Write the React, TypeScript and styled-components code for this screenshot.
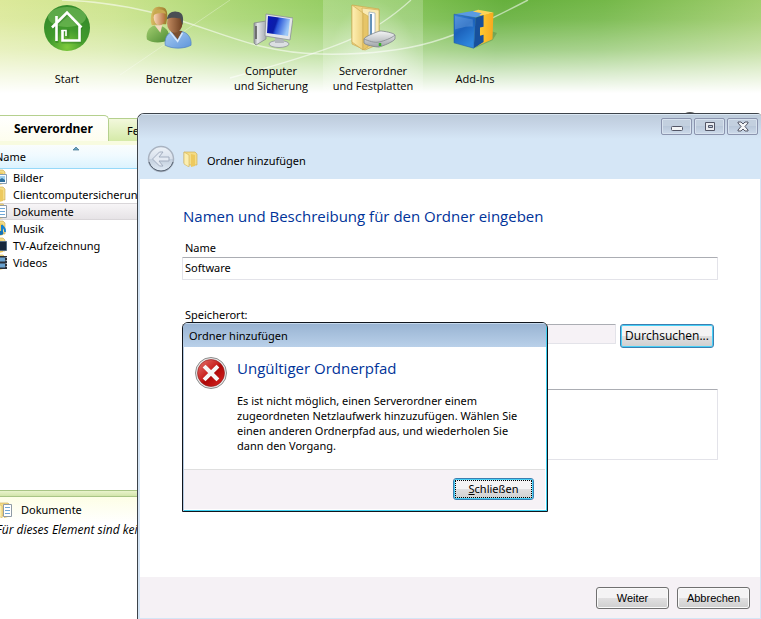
import React from "react";
import styled, { createGlobalStyle, css } from "styled-components";

const Global = createGlobalStyle`
  *, *::before, *::after { box-sizing: border-box; }
  body {
    margin: 0;
    background: #fff;
    color: #000;
    font: 11px/15px "Noto Sans", "Open Sans", sans-serif;
  }
  button, input, textarea { font: inherit; color: inherit; }
`;

const narrowFont = css`
  font-family: "Open Sans", "Noto Sans", sans-serif;
`;

/* ---------- server console ---------- */

const Shell = styled.div`
  position: relative;
  display: flex;
  flex-direction: column;
  min-height: 100vh;
  overflow: hidden;
`;

const Banner = styled.header`
  position: relative;
  height: 96px;
  background:
    linear-gradient(to bottom, rgba(255,255,255,0) 0%, rgba(255,255,255,.08) 20%, rgba(255,255,255,.38) 52%, rgba(255,255,255,.72) 76%, #fff 97%),
    linear-gradient(99deg, #dce99a 0%, #cce48e 15%, #a9d673 31%, #8cc95c 48%, #66b03d 65%, #74b849 78%, #a6d072 100%);
`;

const Swirls = styled.svg`
  position: absolute;
  inset: 0;
  width: 761px;
  height: 96px;
`;

const Nav = styled.nav`
  position: relative;
  display: flex;
  gap: 2px;
  height: 100%;
  padding-left: 17px;
`;

const NavButton = styled.button<{ $active?: boolean }>`
  display: flex;
  flex-direction: column;
  align-items: center;
  justify-content: flex-start;
  width: 100px;
  height: 100%;
  padding: 0;
  border: 0;
  background: none;
  ${(p) =>
    p.$active &&
    css`
      background: radial-gradient(ellipse at 50% 90%, rgba(255,255,255,.7), rgba(255,255,255,.2) 70%);
    `}
`;

const NavIcon = styled.span`
  display: flex;
  align-items: center;
  justify-content: center;
  height: 56px;
  margin-bottom: 5px;
`;

const NavLabel = styled.span`
  ${narrowFont}
  display: flex;
  align-items: center;
  height: 34px;
  white-space: pre-line;
  text-align: center;
`;

const TabBar = styled.div`
  display: flex;
  align-items: flex-end;
  height: 45px;
`;

const Tab = styled.button<{ $active?: boolean }>`
  height: 23px;
  width: 100px;
  padding: 0 0 0 18px;
  text-align: left;
  border: 1px solid #b5d08e;
  border-bottom: 0;
  border-left: 0;
  border-radius: 0 4px 0 0;
  background: linear-gradient(#f2f8dc, #d5eaa8);
  ${(p) =>
    p.$active &&
    css`
      height: 26px;
      width: 109px;
      padding: 0 0 0 14px;
      font-weight: 700;
      font-size: 12px;
      background: linear-gradient(#fff, #fdfdee);
      border-radius: 0 5px 0 0;
    `}
`;

const HelpButton = styled.button`
  display: flex;
  align-items: flex-start;
  width: 24px;
  height: 29px;
  margin: 0 59px 0 auto;
  padding: 0;
  border: 0;
  background: none;
`;

const Panes = styled.main`
  display: flex;
  flex-direction: column;
  flex: 1;
  margin-left: -12px;
`;

const ListPane = styled.section`
  flex: 1;
  border-top: 4px solid #f8fbe0;
`;

const FolderTable = styled.table`
  width: 100%;
  border-collapse: collapse;
`;

const HeadCell = styled.th`
  position: relative;
  height: 23px;
  padding: 1px 0 0 7px;
  text-align: left;
  font-weight: 400;
  background: linear-gradient(#fafdfd, #f0faff 45%, #dcf3fe);
  border-bottom: 1px solid #96d9f9;
`;

const SortMark = styled.svg`
  position: absolute;
  left: 84px;
  top: 1px;
`;

const Row = styled.tr<{ $selected?: boolean }>`
  background: ${(p) => (p.$selected ? "linear-gradient(#f8f6f8, #e5e2e5)" : "none")};
  box-shadow: ${(p) => (p.$selected ? "inset 0 1px #d9d6d9, inset 0 -1px #d9d6d9" : "none")};
`;

const Cell = styled.td`
  height: 17px;
  padding: 0 0 0 3px;
`;

const ItemLabel = styled.span`
  display: flex;
  align-items: center;
  gap: 6px;
  height: 17px;
  white-space: nowrap;
`;

const Splitter = styled.div`
  height: 7px;
  border: solid #a9c586;
  border-width: 1px 0;
  background: linear-gradient(#e9f3cc, #d3e5ab);
`;

const DetailsPane = styled.section`
  height: 122px;
  background: linear-gradient(#fdfee6, #fff 26px);
`;

const DetailsHead = styled.div`
  display: flex;
  align-items: center;
  gap: 9px;
  height: 25px;
  padding-left: 8px;
`;

const DetailsText = styled.p`
  ${narrowFont}
  margin: 0 0 0 8px;
  font-size: 12px;
  font-style: italic;
`;

/* ---------- wizard window ---------- */

const Wizard = styled.section`
  position: absolute;
  left: 137px;
  top: 113px;
  right: 0;
  bottom: 0;
  display: flex;
  flex-direction: column;
  border: solid #3d434a;
  border-width: 1px 0 0 1px;
  border-radius: 7px 4px 0 0;
  background: #fff;
  overflow: hidden;
`;

const WizardHead = styled.header`
  height: 65px;
  background: linear-gradient(#bccbda 0, #c6d4e5 10px, #d5e6f6 25px);
  box-shadow: inset 1px 1px #dbe8f4;
`;

const CaptionButtons = styled.div`
  display: flex;
  justify-content: flex-end;
  gap: 2px;
  padding: 4px 3px 0 0;
`;

const CaptionButton = styled.button`
  display: flex;
  align-items: center;
  justify-content: center;
  width: 31px;
  height: 17px;
  padding: 0;
  border: 1px solid #8b94ae;
  border-radius: 2px;
  background: linear-gradient(#c3d0df 45%, #b9c8da 50%, #cddaea);
  box-shadow: inset 0 0 0 1px #d8e3ef;
`;

const WizardTitle = styled.div`
  display: flex;
  align-items: center;
  height: 28px;
  padding-left: 9px;
  margin-top: 10px;
`;

const BackButton = styled.button`
  width: 28px;
  height: 28px;
  padding: 0;
  margin-right: 8px;
  border: 0;
  background: none;
`;

const TitleText = styled.h1`
  margin: 3px 0 0 8px;
  font-size: 11px;
  font-weight: 400;
`;

const WizardBody = styled.form`
  flex: 1;
  padding: 26px 42px 0 42px;
  border: solid #d5e5f5;
  border-width: 0 1px 0 2px;
`;

const Heading = styled.h2`
  ${narrowFont}
  margin: 0 0 0 1px;
  color: #039;
  font-size: 15px;
  line-height: 22px;
  font-weight: 400;
`;

const FieldLabel = styled.label`
  display: block;
  height: 17px;
  margin-left: 3px;
`;

const fieldBox = css`
  display: block;
  border: 1px solid #e3e3e9;
  border-top-color: #abadb3;
  border-radius: 1px;
  padding: 0 2px;
  outline: 0;
`;

const TextInput = styled.input`
  ${fieldBox}
  width: 100%;
  height: 23px;
  padding-bottom: 2px;
  &:disabled { background: #f6f2f6; height: 20px; flex: 1; }
`;

const TextArea = styled.textarea`
  ${fieldBox}
  width: 100%;
  height: 71px;
  margin-top: 41px;
  resize: none;
`;

const Field = styled.div`
  margin-top: 13px;
  & + & { margin-top: 27px; }
`;

const FieldRow = styled.div`
  display: flex;
  align-items: flex-start;
  gap: 4px;
  padding-right: 4px;
`;

const PushButton = styled.button<{ $width: number; $default?: boolean; $classic?: boolean }>`
  flex: none;
  width: ${(p) => p.$width}px;
  height: 22px;
  padding: 0;
  border: 1px solid #707070;
  border-radius: 3px;
  background: linear-gradient(#f4f3f4 48%, #e0dfe0 52%, #cfcfcf);
  box-shadow: inset 0 0 0 1px #fafafa;
  line-height: 18px;
  ${(p) =>
    p.$default &&
    css`
      border-color: #3c7fb1;
      box-shadow: inset 0 0 0 1px #48d0f7;
    `}
  ${(p) => p.$classic && css`font-family: "Liberation Sans", Arial, sans-serif;`}
`;

const BrowseButton = styled(PushButton)`
  ${narrowFont}
  height: 24px;
  font-size: 12px;
`;

const WizardFoot = styled.footer`
  display: flex;
  justify-content: flex-end;
  gap: 8px;
  height: 42px;
  padding: 10px 10px 0 0;
  background: #f5f1f5;
  border: solid #d5e5f5;
  border-width: 0 1px 1px 2px;
`;

/* ---------- error dialog ---------- */

const ErrorDialog = styled.section`
  position: absolute;
  left: 182px;
  top: 322px;
  width: 366px;
  border: 1px solid #10151c;
  border-radius: 6px 6px 0 0;
  background: #fff;
  box-shadow: inset 1px 0 #b6cbe3, inset -1px -1px #3fd0f0;
  padding: 0 2px 2px 1px;
  overflow: hidden;
`;

const ErrorTitle = styled.header`
  height: 24px;
  padding: 0 6px;
  margin: 0 -1px;
  line-height: 26px;
  background: linear-gradient(#98b3d2, #b9d0e9);
  box-shadow: inset 0 1px #c6d9ec;
`;

const ErrorBody = styled.div`
  display: flex;
  align-items: flex-start;
  gap: 10px;
  height: 122px;
  padding: 10px 16px 0 11px;
`;

const ErrorHeading = styled.h2`
  ${narrowFont}
  margin: 0 0 14px;
  color: #039;
  font-size: 15px;
  line-height: 22px;
  font-weight: 400;
`;

const ErrorMessage = styled.p`
  margin: 0;
  white-space: pre-line;
`;

const ErrorFoot = styled.footer`
  display: flex;
  justify-content: flex-end;
  height: 40px;
  padding: 8px 11px 0 0;
  background: #f6f2f6;
  border-top: 1px solid #dfdfdf;
`;

const CloseButton = styled(PushButton)`
  outline: 1px dotted #000;
  outline-offset: -3px;
`;

/* ---------- drawings ---------- */

const HomeIcon = () => (
  <svg width="48" height="48" viewBox="0 0 48 48">
    <defs>
      <radialGradient id="home" cx="50%" cy="92%" r="80%">
        <stop offset="0" stopColor="#7fcb3c" />
        <stop offset=".5" stopColor="#419a2d" />
        <stop offset="1" stopColor="#348a2a" />
      </radialGradient>
    </defs>
    <circle cx="24" cy="24" r="23" fill="url(#home)" />
    <ellipse cx="24" cy="13" rx="19" ry="10" fill="#8fce6f" opacity=".45" />
    <path d="M9 23 24 9l4 4M29 14l9 10M13 20v18M36 21v16H19V26h5v7" fill="none" stroke="#246f1d" strokeWidth="3" opacity=".4" transform="translate(1 1)" />
    <path d="M9 23.500 24 8.500 38.500 23.500M13.500 12v25M36.500 21v15.500H19.500V26" fill="none" stroke="#fff" strokeWidth="2.600" />
    <path d="M18.500 26.500h4.500V32" fill="none" stroke="#fff" strokeWidth="1.600" />
  </svg>
);

const UsersIcon = () => (
  <svg width="46" height="46" viewBox="0 0 48 48">
    <defs>
      <linearGradient id="hair" x1="0" x2="1"><stop stopColor="#d9bd65" /><stop offset="1" stopColor="#9b7a2b" /></linearGradient>
      <linearGradient id="face" x1="0" x2="1"><stop stopColor="#fad9b8" /><stop offset="1" stopColor="#b5703c" /></linearGradient>
      <linearGradient id="face2" x1="0" x2="1"><stop stopColor="#c38c62" /><stop offset="1" stopColor="#6d3f20" /></linearGradient>
      <linearGradient id="green" x1="0" y1="0" x2="1" y2="1"><stop stopColor="#a5cf71" /><stop offset="1" stopColor="#4d8c33" /></linearGradient>
      <linearGradient id="blue" x1="0" y1="0" x2="1" y2="1"><stop stopColor="#a9cdf3" /><stop offset="1" stopColor="#5f95da" /></linearGradient>
    </defs>
    <path d="M1 36c-2-9 4-15 10-15s13 4 13 11v4c-6 4-18 4-23 0z" fill="url(#green)" />
    <path d="M9 21h8l-2 8z" fill="#f3d9bd" />
    <path d="M5 17C5 5 9 1 15 2c6 0 8 4 7 12l-1 6h-6l-9 1z" fill="url(#hair)" />
    <ellipse cx="14" cy="13" rx="6" ry="8" fill="url(#face)" />
    <path d="M7 11c1-7 12-9 14-2-5-1-8-1-14 2z" fill="#c8a84f" />
    <path d="M20 42c-1-10 4-15 13-15s15 6 14 15c-7 4-20 4-27 0z" fill="url(#blue)" stroke="#4f82c0" strokeWidth=".7" />
    <path d="M26 27h12l-5 9z" fill="#7a5030" />
    <path d="M25 28l8 10 5-9" fill="none" stroke="#d8e9fb" strokeWidth="1.500" />
    <ellipse cx="30" cy="19" rx="8" ry="10" fill="url(#face2)" />
    <path d="M22 15c0-6 5-9 10-8 6 0 8 5 6 14l-2-7c-5 0-9-2-14 1z" fill="#4a4f54" />
  </svg>
);

const ComputerIcon = () => (
  <svg width="44" height="44" viewBox="-2 -2 44 44">
    <defs>
      <linearGradient id="screen" x1="0" x2="1" y2=".3"><stop stopColor="#0a16b8" /><stop offset=".45" stopColor="#0b1ea8" /><stop offset=".55" stopColor="#2a55d8" /><stop offset="1" stopColor="#9cc8f8" /></linearGradient>
      <linearGradient id="metal" x1="0" x2="1"><stop stopColor="#8d9296" /><stop offset=".3" stopColor="#e4e6e8" /><stop offset="1" stopColor="#a6abb0" /></linearGradient>
    </defs>
    <path d="M3 15l12-2v18L5 37l-2-2z" fill="url(#metal)" stroke="#85898d" strokeWidth=".8" />
    <path d="M5 18v13" stroke="#555" strokeWidth="1.500" />
    <ellipse cx="28" cy="36" rx="10" ry="3.500" fill="#dcdfe2" stroke="#8e9499" strokeWidth=".8" />
    <path d="M24 28h8l1 7h-9z" fill="#b3b8bd" />
    <path d="M15 6l27 4-3 22-25-4z" fill="#e3e6e9" stroke="#8b9095" strokeWidth=".8" />
    <path d="M17 8l22 3-2 17-21-3z" fill="url(#screen)" />
  </svg>
);

const ServerFolderIcon = () => (
  <svg width="48" height="48" viewBox="0 0 48 48">
    <defs>
      <linearGradient id="fold" x1="0" x2="1"><stop stopColor="#fff0b4" /><stop offset="1" stopColor="#ecd07c" /></linearGradient>
      <linearGradient id="disk" x1="0" y1="0" x2="0" y2="1"><stop stopColor="#f4f5f6" /><stop offset="1" stopColor="#9fa4a8" /></linearGradient>
    </defs>
    <path d="M3 1l27 4v35l-14 6L3 40z" fill="#f0d584" stroke="#caa94d" strokeWidth=".7" />
    <path d="M13 4l17 2v32l-13 5z" fill="#f9eab3" stroke="#c9a648" strokeWidth=".6" />
    <path d="M20 8l6 1v30l-6 3z" fill="#fff" stroke="#9aabb5" strokeWidth=".7" />
    <path d="M22 10v28" stroke="#6593b9" strokeWidth="2" />
    <path d="M3 1l11 8v37L3 38z" fill="url(#fold)" stroke="#cfae55" strokeWidth=".7" />
    <path d="M14 9l5 3v31l-5 3z" fill="#e6c568" stroke="#c9a648" strokeWidth=".5" />
    <path d="M15 35c0-2 12-7 16-8 4 0 14 2 15 4v4c-2 3-12 7-16 8-4 0-14-2-15-4z" fill="url(#disk)" stroke="#7f8589" strokeWidth=".8" />
    <path d="M15 35c5 2 10 4 15 3 5-1 13-4 16-7" fill="none" stroke="#868b90" strokeWidth=".8" />
    <path d="M31 39v3" stroke="#36ae2b" strokeWidth="2.500" />
  </svg>
);

const AddInsIcon = () => (
  <svg width="45" height="43" viewBox="4 -2 50 48">
    <defs>
      <linearGradient id="cube" x1="0" y1="0" x2=".5" y2="1"><stop stopColor="#3b83d8" /><stop offset=".5" stopColor="#1c62bc" /><stop offset="1" stopColor="#2e86dd" /></linearGradient>
      <linearGradient id="gold" x1="0" x2="1"><stop stopColor="#ffcf35" /><stop offset="1" stopColor="#f7a81e" /></linearGradient>
    </defs>
    <path d="M28 44l20-9 5-8-6-2z" fill="#3b6824" opacity=".3" />
    <path d="M5 6l24-4 10 2-5 4-6 2z" fill="#5a9ae2" />
    <path d="M26 3l6-2 17 3-12 4-4-1 3-2z" fill="#ffd356" />
    <path d="M34 8l15-4-1 30-16 7z" fill="url(#gold)" />
    <path d="M29 10l9-3v13l-4 1v9l4-1v8l-11 7z" fill="#17509c" />
    <path d="M5 6l24 4-2 34-22-6z" fill="url(#cube)" stroke="#1c5aa5" strokeWidth=".6" />
    <path d="M6 8l20 4v8C18 19 12 22 6 23z" fill="#a3cbf5" opacity=".25" />
  </svg>
);

const FolderIcon = ({ size = 16, kind = "plain" }: { size?: number; kind?: string }) => (
  <svg width={size} height={size} viewBox="0 0 16 16">
    <path d="M1 1h11l2 2v11H5l-4-2z" fill="#f4dc87" stroke="#c9a74d" strokeWidth=".6" />
    <path d="M1 1l5 3v12l-5-3z" fill="#fbeeb0" stroke="#d3b35b" strokeWidth=".6" />
    <path d="M8 3l4 1v11l-4 1z" fill="#edc95e" />
    {kind === "image" && <path d="M6.500 5.500h9v9h-9z" fill="#f8fbff" stroke="#8ba0b4" />}
    {kind === "image" && <path d="M8 7h6v6H8z" fill="#9fd0ee" />}
    {kind === "image" && <path d="M8 13v-2l3-2 3 2v2z" fill="#2e6f9e" />}
    {kind === "document" && <path d="M7.500 2.500h8v12h-8z" fill="#fff" stroke="#8f9ba5" />}
    {kind === "document" && <path d="M9 5.500h5M9 8.500h5M9 11.500h5" stroke="#6fa8d8" />}
    {kind === "music" && <path d="M11 14V5c1 3 4 3 3 7" fill="none" stroke="#1681d1" strokeWidth="2" />}
    {kind === "music" && <ellipse cx="10" cy="13" rx="2.500" ry="2" fill="#1672b8" />}
    {kind === "tv" && <path d="M2 4.500h13.500v9H2z" fill="#18283b" stroke="#536b80" />}
    {kind === "video" && <path d="M7 2h9v13H7z" fill="#2a3038" />}
    {kind === "video" && <path d="M9 3.500h5v4H9zM9 9.500h5v4H9z" fill="#6aa2cf" />}
    {kind === "video" && <path d="M8 3v12M15.200 3v12" stroke="#e8ecf0" strokeDasharray="1 2" />}
  </svg>
);

const BackIcon = () => (
  <svg width="28" height="28" viewBox="0 0 28 28">
    <defs>
      <linearGradient id="back" x1="0" y1="0" x2="0" y2="1">
        <stop stopColor="#edf2f8" /><stop offset=".48" stopColor="#d9e1ec" /><stop offset=".52" stopColor="#c3cfdd" /><stop offset="1" stopColor="#e3edf8" />
      </linearGradient>
    </defs>
    <circle cx="14" cy="14" r="12.500" fill="url(#back)" stroke="#a9b3c1" strokeWidth="1.500" />
    <path d="M2 17a12.500 12.500 0 0 0 24 0" fill="none" stroke="#566272" />
    <path d="M5.500 14l7-7h3.500l-4 5h10v4H12l4 5h-3.500z" fill="#e4eaf3" stroke="#a3aec0" strokeWidth="1" />
  </svg>
);

const ErrorIcon = () => (
  <svg width="32" height="32" viewBox="0 0 32 32" role="img" aria-label="Fehler">
    <defs>
      <linearGradient id="err" x1="0" y1="0" x2="1" y2="1">
        <stop stopColor="#e37a75" /><stop offset=".45" stopColor="#c9211e" /><stop offset=".55" stopColor="#ad0707" /><stop offset="1" stopColor="#de2925" />
      </linearGradient>
    </defs>
    <circle cx="16" cy="16" r="15.500" fill="#e9e9e9" stroke="#8c8c8c" />
    <circle cx="16" cy="16" r="13.500" fill="url(#err)" stroke="#8e1717" strokeWidth=".6" />
    <path d="M10.500 10.500l11 11M21.500 10.500l-11 11" stroke="#f6f6f6" strokeWidth="4" strokeLinecap="square" />
  </svg>
);

const sections = [
  { label: "Start", icon: <HomeIcon /> },
  { label: "Benutzer", icon: <UsersIcon /> },
  { label: "Computer\nund Sicherung", icon: <ComputerIcon /> },
  { label: "Serverordner\nund Festplatten", icon: <ServerFolderIcon />, active: true },
  { label: "Add-Ins", icon: <AddInsIcon /> },
];

const folders = [
  { name: "Bilder", kind: "image" },
  { name: "Clientcomputersicherung", kind: "plain" },
  { name: "Dokumente", kind: "document", selected: true },
  { name: "Musik", kind: "music" },
  { name: "TV-Aufzeichnung", kind: "tv" },
  { name: "Videos", kind: "video" },
];

export default function App() {
  return (
    <Shell>
      <Global />
      <Banner>
        <Swirls viewBox="0 0 761 96" fill="none" stroke="#fff" aria-hidden="true">
          <path d="M62 0C190 5 225 52 320 54S455 38 528 0" strokeWidth="1.500" opacity=".55" />
          <path d="M230 0L120 75" opacity=".3" />
          <path d="M411 0C372 35 340 48 230 78" strokeWidth="1.300" opacity=".55" />
        </Swirls>
        <Nav>
          {sections.map((s) => (
            <NavButton key={s.label} type="button" $active={s.active}>
              <NavIcon>{s.icon}</NavIcon>
              <NavLabel>{s.label}</NavLabel>
            </NavButton>
          ))}
        </Nav>
      </Banner>
      <TabBar>
        <Tab type="button" $active>Serverordner</Tab>
        <Tab type="button">Festplatten</Tab>
        <HelpButton type="button" aria-label="Hilfe">
          <svg width="24" height="24" viewBox="0 0 24 24"><circle cx="12" cy="12" r="12" fill="#555" /></svg>
        </HelpButton>
      </TabBar>
      <Panes>
        <ListPane>
          <FolderTable>
            <thead>
              <tr>
                <HeadCell scope="col">
                  Name
                  <SortMark width="8" height="5" viewBox="0 0 8 5"><path d="M1 4l3-3 3 3z" fill="#6aa5c5" stroke="#3f728d" strokeWidth=".7" /></SortMark>
                </HeadCell>
              </tr>
            </thead>
            <tbody>
              {folders.map((f) => (
                <Row key={f.name} $selected={f.selected}>
                  <Cell><ItemLabel><FolderIcon kind={f.kind} />{f.name}</ItemLabel></Cell>
                </Row>
              ))}
            </tbody>
          </FolderTable>
        </ListPane>
        <Splitter />
        <DetailsPane>
          <DetailsHead><FolderIcon kind="document" />Dokumente</DetailsHead>
          <DetailsText>Für dieses Element sind keine</DetailsText>
        </DetailsPane>
      </Panes>

      <Wizard>
        <WizardHead>
          <CaptionButtons>
            <CaptionButton type="button" aria-label="Minimieren">
              <svg width="12" height="12"><rect x=".5" y="5.500" width="11" height="4" rx="1" fill="#f3f5f7" stroke="#535666" /></svg>
            </CaptionButton>
            <CaptionButton type="button" aria-label="Maximieren">
              <svg width="12" height="11"><path d="M1.500 1.500h9v8h-9zM4.500 4.500h4v2h-4z" fill="#e8ebf0" fillRule="evenodd" stroke="#535666" /></svg>
            </CaptionButton>
            <CaptionButton type="button" aria-label="Schließen">
              <svg width="12" height="11" viewBox="0 0 12 11"><path d="M1 1h3l2 2 2-2h3v1L8 5.500 11 9v1H8L6 8l-2 2H1V9l3-3.500L1 2z" fill="#f3f5f7" stroke="#535666" /></svg>
            </CaptionButton>
          </CaptionButtons>
          <WizardTitle>
            <BackButton type="button" aria-label="Zurück"><BackIcon /></BackButton>
            <FolderIcon />
            <TitleText>Ordner hinzufügen</TitleText>
          </WizardTitle>
        </WizardHead>
        <WizardBody onSubmit={(e) => e.preventDefault()}>
          <Heading>Namen und Beschreibung für den Ordner eingeben</Heading>
          <Field>
            <FieldLabel htmlFor="folder-name">Name</FieldLabel>
            <TextInput id="folder-name" defaultValue="Software" />
          </Field>
          <Field>
            <FieldLabel htmlFor="folder-path">Speicherort:</FieldLabel>
            <FieldRow>
              <TextInput id="folder-path" disabled />
              <BrowseButton type="button" $width={94} $default>Durchsuchen...</BrowseButton>
            </FieldRow>
          </Field>
          <TextArea aria-label="Beschreibung" />
        </WizardBody>
        <WizardFoot>
          <PushButton type="button" $width={73} $classic>Weiter</PushButton>
          <PushButton type="button" $width={73} $classic>Abbrechen</PushButton>
        </WizardFoot>
      </Wizard>

      <ErrorDialog role="alertdialog" aria-labelledby="error-heading">
        <ErrorTitle>Ordner hinzufügen</ErrorTitle>
        <ErrorBody>
          <ErrorIcon />
          <div>
            <ErrorHeading id="error-heading">Ungültiger Ordnerpfad</ErrorHeading>
            <ErrorMessage>
              {"Es ist nicht möglich, einen Serverordner einem\nzugeordneten Netzlaufwerk hinzuzufügen. Wählen Sie\neinen anderen Ordnerpfad aus, und wiederholen Sie\ndann den Vorgang."}
            </ErrorMessage>
          </div>
        </ErrorBody>
        <ErrorFoot>
          <CloseButton type="button" $width={81} $default><u>S</u>chließen</CloseButton>
        </ErrorFoot>
      </ErrorDialog>
    </Shell>
  );
}
